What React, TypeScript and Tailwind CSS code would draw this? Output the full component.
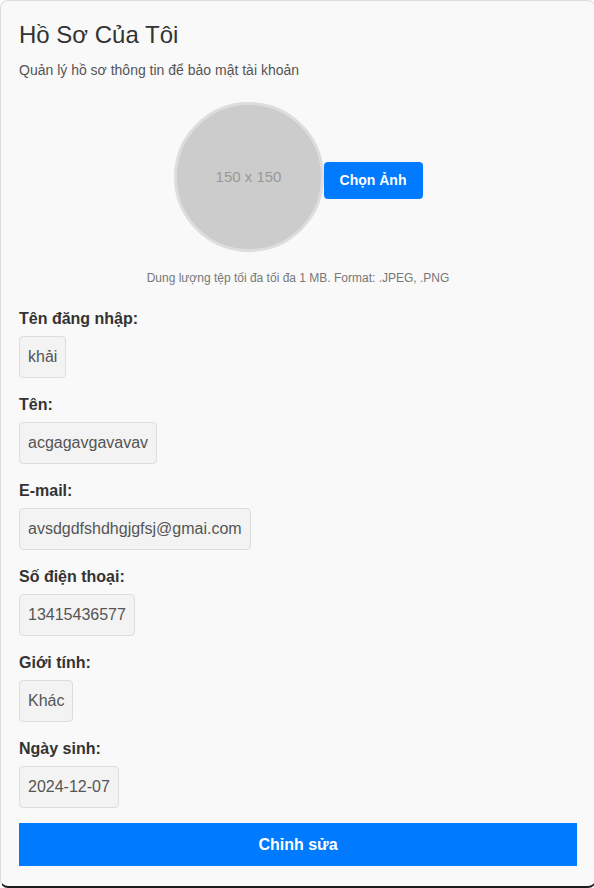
const fields = [
  { label: "Tên đăng nhập:", value: "khải" },
  { label: "Tên:", value: "acgagavgavavav" },
  { label: "E-mail:", value: "avsdgdfshdhgjgfsj@gmai.com" },
  { label: "Số điện thoại:", value: "13415436577" },
  { label: "Giới tính:", value: "Khác" },
  { label: "Ngày sinh:", value: "2024-12-07" },
];

export default function App() {
  return (
    <div className="w-[594px] h-[888px] overflow-hidden bg-white font-['Liberation_Sans',Arial,sans-serif]">
      <div className="w-[596px] h-[888px] box-border bg-[#f9f9f9] border border-[#dddddd] border-b-2 border-b-[#1c1c1c] rounded-lg px-[18px] pt-[20px]">
        {/* Header */}
        <h2 className="text-[24px] leading-[28px] text-[#333333] font-normal">Hồ Sơ Của Tôi</h2>
        <p className="mt-[11px] text-[14px] leading-[20px] text-[#555555]">
          Quản lý hồ sơ thông tin để bảo mật tài khoản
        </p>

        {/* Avatar */}
        <div className="mt-[22px] flex justify-center items-center">
          <div className="w-[150px] h-[150px] box-border rounded-full bg-[#cccccc] border-[3px] border-[#dddddd] flex items-center justify-center">
            <span className="text-[15px] text-[#999999]">150 x 150</span>
          </div>
          <button className="mt-[6px] w-[99px] h-[37px] rounded-[4px] bg-[#007bff] text-white text-[14px] font-bold">
            Chọn Ảnh
          </button>
        </div>
        <p className="mt-[18px] text-center text-[12px] leading-[16px] text-[#777777]">
          Dung lượng tệp tối đa tối đa 1 MB. Format: .JPEG, .PNG
        </p>

        {/* Fields */}
        <div className="mt-[23px] flex flex-col gap-[17px]">
          {fields.map((f) => (
            <div key={f.label} className="flex flex-col items-start">
              <label className="text-[16px] leading-[20px] font-bold text-[#333333]">{f.label}</label>
              <div className="mt-[7px] px-[8px] py-[10px] text-[16px] leading-[20px] text-[#555555] bg-[#f3f3f3] border border-[#dddddd] rounded-[4px]">
                {f.value}
              </div>
            </div>
          ))}
        </div>

        <button className="mt-[15px] w-full h-[43px] bg-[#007bff] text-white text-[16px] font-bold">
          Chỉnh sửa
        </button>
      </div>
    </div>
  );
}
